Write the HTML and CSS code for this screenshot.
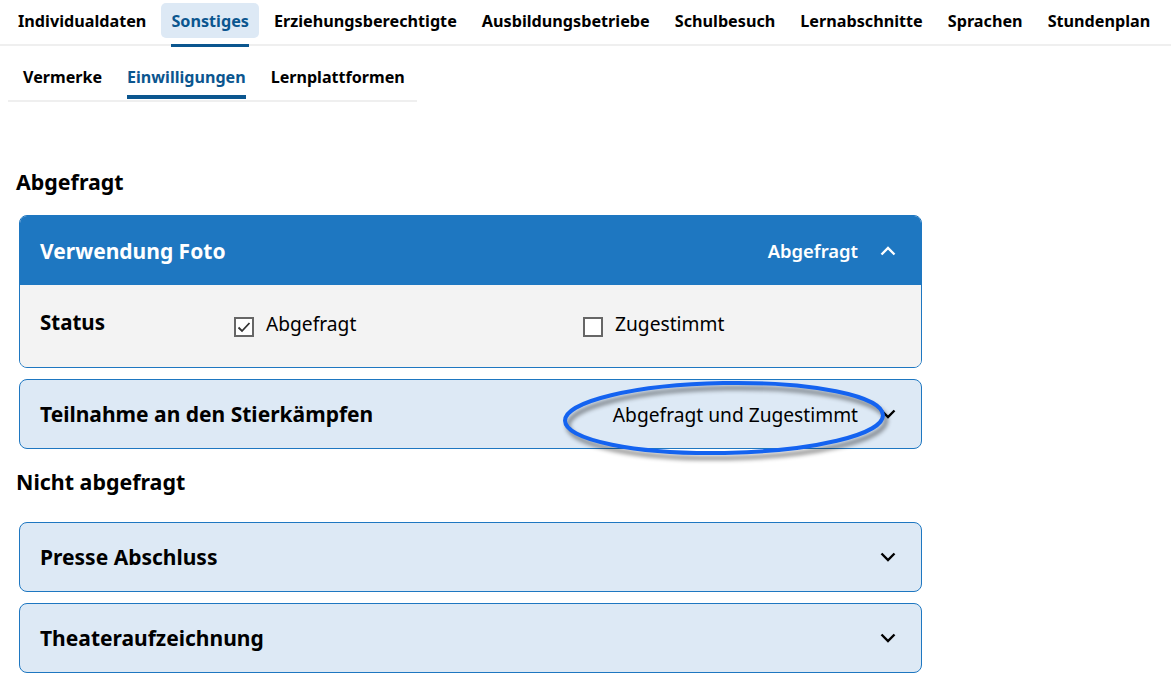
FILE: index.html
```html
<!DOCTYPE html>
<html lang="de">

<head>
    <meta charset="UTF-8">
    <meta name="viewport" content="width=device-width, initial-scale=1.0">
    <title>Schüler – Einwilligungen</title>
    <link rel="stylesheet" href="styles.css">
</head>

<body>
    <nav class="tabs">
        <a class="tab"><span class="tab-label">Individualdaten</span><span class="tab-line"></span></a>
        <a class="tab active"><span class="tab-label">Sonstiges</span><span class="tab-line"></span></a>
        <a class="tab"><span class="tab-label">Erziehungsberechtigte</span><span class="tab-line"></span></a>
        <a class="tab"><span class="tab-label">Ausbildungsbetriebe</span><span class="tab-line"></span></a>
        <a class="tab"><span class="tab-label">Schulbesuch</span><span class="tab-line"></span></a>
        <a class="tab"><span class="tab-label">Lernabschnitte</span><span class="tab-line"></span></a>
        <a class="tab"><span class="tab-label">Sprachen</span><span class="tab-line"></span></a>
        <a class="tab"><span class="tab-label">Stundenplan</span><span class="tab-line"></span></a>
    </nav>

    <nav class="subtabs">
        <a class="subtab"><span class="subtab-label">Vermerke</span><span class="subtab-line"></span></a>
        <a class="subtab active"><span class="subtab-label">Einwilligungen</span><span class="subtab-line"></span></a>
        <a class="subtab"><span class="subtab-label">Lernplattformen</span><span class="subtab-line"></span></a>
    </nav>

    <main class="content">
        <h2 class="section-title">Abgefragt</h2>

        <div class="card open">
            <div class="card-header">
                <span class="card-title">Verwendung Foto</span>
                <span class="card-status">Abgefragt</span>
                <svg class="chevron" viewBox="0 0 16 10" width="16" height="10">
                    <polyline points="1.5,8.5 8,2 14.5,8.5" />
                </svg>
            </div>
            <div class="card-body">
                <span class="field-label">Status</span>
                <label class="check">
                    <span class="box">
                        <svg viewBox="0 0 16 16" width="16" height="16">
                            <polyline points="2.5,8.5 6,12 13.5,4" />
                        </svg>
                    </span>
                    Abgefragt
                </label>
                <label class="check">
                    <span class="box"></span>
                    Zugestimmt
                </label>
            </div>
        </div>

        <div class="card">
            <div class="card-header">
                <span class="card-title">Teilnahme an den Stierkämpfen</span>
                <span class="card-status">Abgefragt und Zugestimmt</span>
                <svg class="chevron" viewBox="0 0 16 10" width="16" height="10">
                    <polyline points="1.5,1.5 8,8 14.5,1.5" />
                </svg>
            </div>
        </div>

        <h2 class="section-title second">Nicht abgefragt</h2>

        <div class="card">
            <div class="card-header">
                <span class="card-title">Presse Abschluss</span>
                <svg class="chevron" viewBox="0 0 16 10" width="16" height="10">
                    <polyline points="1.5,1.5 8,8 14.5,1.5" />
                </svg>
            </div>
        </div>

        <div class="card">
            <div class="card-header">
                <span class="card-title">Theateraufzeichnung</span>
                <svg class="chevron" viewBox="0 0 16 10" width="16" height="10">
                    <polyline points="1.5,1.5 8,8 14.5,1.5" />
                </svg>
            </div>
        </div>
    </main>

    <!-- annotation ring around the status text -->
    <svg class="highlight" viewBox="0 0 340 100" width="340" height="100">
        <ellipse cx="169" cy="45" rx="159" ry="35" transform="rotate(-1 169 45)" />
    </svg>
</body>

</html>
```

FILE: styles.css
```css
body {
    margin: 0;
    font-family: "Noto Sans", "Open Sans", sans-serif;
    color: #000;
    background: #fff;
    overflow: hidden;
}

/* main tabs */
.tabs {
    display: flex;
    gap: 5px;
    padding: 3px 8px 0;
    box-shadow: 0 2px 0 #efefef;
}

.tab {
    display: flex;
    flex-direction: column;
    font-size: 16.2px;
    font-weight: 700;
}

.tab-label {
    height: 33px;
    line-height: 33px;
    padding: 2px 10px 0;
    border-radius: 5px;
}

.tab-line {
    height: 3px;
    margin: 6px 10px -3px;
}

.tab.active .tab-label {
    background: #dde9f5;
    color: #0b568f;
}

.tab.active .tab-line {
    background: #0b568f;
}

/* sub tabs */
.subtabs {
    display: inline-flex;
    gap: 25px;
    margin: 21px 0 0 8px;
    padding: 0 12px 1px 15px;
    box-shadow: 0 2px 0 #efefef;
}

.subtab {
    display: flex;
    flex-direction: column;
    font-size: 16.1px;
    font-weight: 700;
}

.subtab-label {
    line-height: 24px;
}

.subtab-line {
    height: 4px;
    margin-top: 6px;
}

.subtab.active .subtab-label {
    color: #0b568f;
}

.subtab.active .subtab-line {
    background: #0b568f;
}

/* content */
.content {
    padding: 0 16px;
}

.section-title {
    margin: 68px 0 19px;
    font-size: 21.4px;
    line-height: 28px;
    font-weight: 700;
}

.section-title.second {
    margin: 19px 0 26px;
}

.card {
    width: 901px;
    margin: 0 0 11px 3px;
    border: 1px solid #1e77c1;
    border-radius: 8px;
    background: #dde9f5;
    overflow: hidden;
}

.card-header {
    display: flex;
    align-items: center;
    height: 68px;
    padding: 0 25px 0 20px;
}

.card-title {
    flex: 1;
    font-size: 21px;
    font-weight: 700;
}

.card-status {
    font-size: 19.2px;
    margin-right: 22px;
}

.chevron {
    fill: none;
    stroke: #000;
    stroke-width: 2.4;
}

.card.open .card-header {
    height: 69px;
    background: #1e77c1;
    color: #fff;
}

.card.open .card-status {
    font-size: 18.4px;
    font-weight: 600;
}

.card.open .chevron {
    stroke: #fff;
}

.card-body {
    display: grid;
    grid-template-columns: 194px 349px 1fr;
    align-items: start;
    padding: 24px 20px 28px;
    background: #f3f3f3;
}

.field-label {
    margin-top: -2px;
    font-size: 20.5px;
    font-weight: 700;
    line-height: 30px;
}

.check {
    display: flex;
    align-items: center;
    gap: 12px;
    font-size: 19.2px;
    line-height: 30px;
}

.box {
    display: flex;
    align-items: center;
    justify-content: center;
    width: 16px;
    height: 16px;
    margin-top: 5px;
    border: 2px solid #666;
    background: #fff;
}

.box svg {
    fill: none;
    stroke: #333;
    stroke-width: 1.8;
}

/* annotation */
.highlight {
    position: absolute;
    left: 555px;
    top: 373px;
    overflow: visible;
    filter: drop-shadow(3px 5px 2px rgba(0, 0, 0, 0.45));
}

.highlight ellipse {
    fill: none;
    stroke: #1463f0;
    stroke-width: 4;
}
```
